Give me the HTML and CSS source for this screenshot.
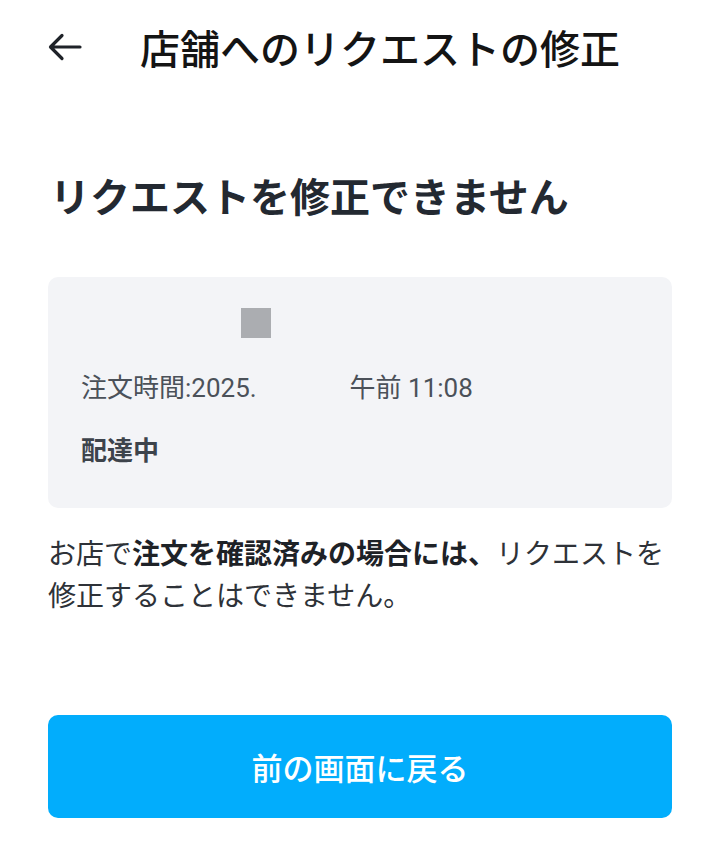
FILE: index.html
```html
<!DOCTYPE html>
<html lang="ja">
  <head>
    <meta charset="UTF-8" />
    <title>店舗へのリクエストの修正</title>
    <link rel="stylesheet" href="styles.css">
  </head>
  <body>
    <div class="page">
      <header class="topbar">
        <a href="#" class="back" aria-label="戻る">
          <svg width="34" height="28" viewBox="0 0 34 28" fill="none">
            <path d="M32 14H3M14 2.5L2.5 14L14 25.5" stroke="#1f2329" stroke-width="3.2" stroke-linecap="round" stroke-linejoin="round"/>
          </svg>
        </a>
        <h1 class="title">店舗へのリクエストの修正</h1>
      </header>

      <h2 class="heading">リクエストを修正できません</h2>

      <div class="card">
        <div class="thumb"></div>
        <div class="masked"></div>
        <p class="time">注文時間:2025.<span class="hidden-date"></span>午前 11:08</p>
        <p class="status">配達中</p>
      </div>

      <p class="note"><span>お店で</span><strong>注文を確認済みの場合には、</strong><span>リクエストを修正することはできません。</span></p>

      <button type="button" class="back-button">前の画面に戻る</button>
    </div>
  </body>
</html>
```

FILE: styles.css
```css
* {
  box-sizing: border-box;
}
body {
  margin: 0;
  background: #fff;
  font-family: Roboto, "Noto Sans CJK JP", sans-serif;
  color: #2a2f36;
}
.page {
  padding: 0 48px;
}
.topbar {
  height: 94px;
  display: flex;
  align-items: center;
}
.back {
  display: flex;
  width: 92px;
}
.title {
  margin: 0;
  font-family: "Noto Sans CJK JP", sans-serif;
  font-size: 40px;
  font-weight: 500;
  line-height: 50px;
  color: #141414;
}
.heading {
  margin: 73px 0 0 2px;
  font-family: "Noto Sans CJK JP", sans-serif;
  font-size: 40px;
  font-weight: 700;
  line-height: 56px;
  color: #232931;
}
.card {
  margin-top: 54px;
  background: #f3f4f7;
  border-radius: 10px;
  padding: 31px 33px 39px;
}
.thumb {
  width: 30px;
  height: 30px;
  margin-left: 160px;
  background: #abadb1;
}
.masked {
  height: 30px;
}
.time,
.status {
  margin: 0;
  font-size: 26px;
  line-height: 40px;
  color: #4b5159;
}
.hidden-date {
  display: inline-block;
  width: 93px;
}
.status {
  margin-top: 21px;
  font-family: "Noto Sans CJK JP", sans-serif;
  font-weight: 700;
  color: #3d434b;
}
.note {
  margin: 23px 0 0;
  font-family: "Noto Sans CJK JP", sans-serif;
  font-size: 28px;
  line-height: 42px;
  color: #2e3238;
}
.note strong {
  font-weight: 700;
  color: #1e2227;
}
.back-button {
  display: block;
  width: 100%;
  height: 103px;
  margin-top: 100px;
  border: none;
  border-radius: 10px;
  background: #02adfc;
  color: #fff;
  font-family: "Noto Sans CJK JP", sans-serif;
  font-size: 31px;
  font-weight: 500;
}
```
